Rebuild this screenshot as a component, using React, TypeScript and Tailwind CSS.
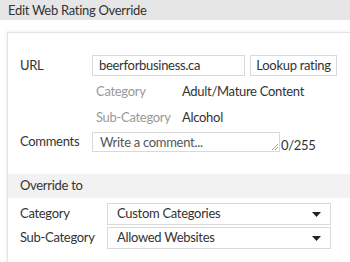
import React from 'react';

const Caret: React.FC = () => (
  <svg width="9" height="5" viewBox="0 0 9 5" className="shrink-0">
    <path d="M0 0 H9 L4.5 5 Z" fill="#222" />
  </svg>
);

const SelectBox: React.FC<{ value: string }> = ({ value }) => (
  <div className="w-[224px] h-[22px] border border-[#d9d9d9] bg-white flex items-center justify-between pl-[9px] pr-[9px] text-[13px] text-[#333]">
    <span>{value}</span>
    <Caret />
  </div>
);

const App: React.FC = () => {
  return (
    <div className="w-[350px] h-[262px] bg-white overflow-hidden text-[#333] tracking-[-0.3px]" style={{ fontFamily: 'Lato, "Open Sans", sans-serif' }}>
      {/* Title bar */}
      <div className="h-[20px] bg-[#e6e6e6] px-[8px] text-[13px] leading-[21px] text-[#333]">Edit Web Rating Override</div>

      <div className="pt-[12px] pl-[7px]">
        <div className="border-l border-t border-[#e2e2e2] shadow-[-1px_-1px_3px_rgba(0,0,0,0.06)] h-[240px]">
          {/* URL row */}
          <div className="flex items-center pl-[12px] pt-[22px]">
            <div className="w-[72px] text-[13px]">URL</div>
            <div className="w-[153px] h-[21px] border border-[#d9d9d9] flex items-center pl-[6px] text-[13px]">beerforbusiness.ca</div>
            <div className="ml-[5px] w-[87px] h-[21px] border border-[#d9d9d9] flex items-center justify-center text-[13px]">Lookup rating</div>
          </div>

          {/* Current rating */}
          <div className="pl-[88px] pt-[3px] text-[13px]">
            <div className="flex items-center h-[26px]">
              <div className="w-[86px] text-[#999]">Category</div>
              <div>Adult/Mature Content</div>
            </div>
            <div className="flex items-center h-[26px]">
              <div className="w-[86px] text-[#999]">Sub-Category</div>
              <div>Alcohol</div>
            </div>
          </div>

          {/* Comments */}
          <div className="flex items-end pl-[12px] pt-[1px]">
            <div className="w-[72px] text-[13px] self-center">Comments</div>
            <div className="relative w-[188px] h-[20px] border border-[#d9d9d9] pl-[7px] text-[13px] leading-[18px] text-[#555]">
              Write a comment...
              <svg width="6" height="6" viewBox="0 0 6 6" className="absolute right-[1px] bottom-[1px]">
                <path d="M6 0 L0 6 M6 3 L3 6" stroke="#aaa" strokeWidth="1" />
              </svg>
            </div>
            <div className="text-[13px] leading-[14px] ml-[1px]">0/255</div>
          </div>

          {/* Override section */}
          <div className="mt-[22px] h-[24px] bg-[#f2f2f2] pl-[12px] flex items-center text-[13px]">Override to</div>

          <div className="pl-[12px] pt-[5px] flex flex-col gap-[2px] text-[13px]">
            <div className="flex items-center">
              <div className="w-[87px]">Category</div>
              <SelectBox value="Custom Categories" />
            </div>
            <div className="flex items-center">
              <div className="w-[87px]">Sub-Category</div>
              <SelectBox value="Allowed Websites" />
            </div>
          </div>
        </div>
      </div>
    </div>
  );
};

export default App;
